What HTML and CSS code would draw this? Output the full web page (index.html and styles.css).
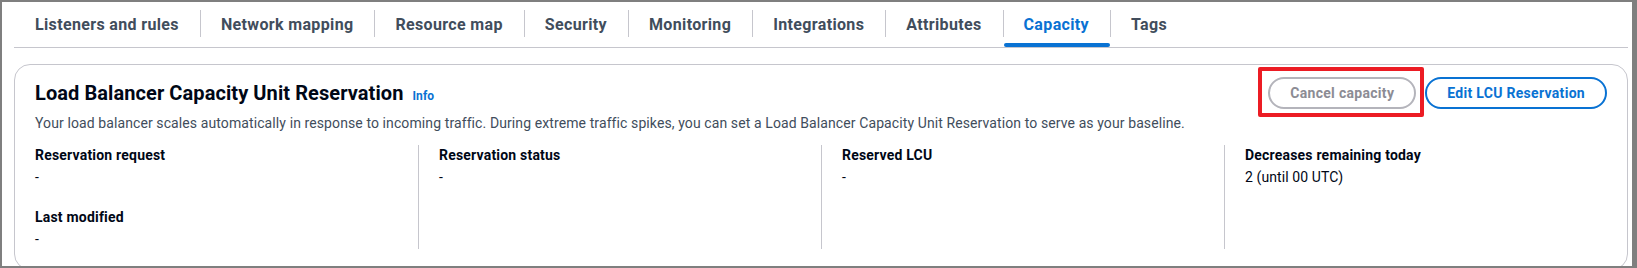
FILE: index.html
```html
<!DOCTYPE html>
<html lang="en">
<head>
    <meta charset="UTF-8">
    <meta name="viewport" content="width=device-width, initial-scale=1.0">
    <title>Load balancer - Capacity</title>
    <link rel="stylesheet" href="styles.css">
</head>
<body>
    <div class="frame">
        <div class="tabs">
            <div class="tab"><span class="tab-label">Listeners and rules</span></div>
            <div class="tab"><span class="tab-label">Network mapping</span></div>
            <div class="tab"><span class="tab-label">Resource map</span></div>
            <div class="tab"><span class="tab-label">Security</span></div>
            <div class="tab"><span class="tab-label">Monitoring</span></div>
            <div class="tab"><span class="tab-label">Integrations</span></div>
            <div class="tab"><span class="tab-label">Attributes</span></div>
            <div class="tab active"><span class="tab-label">Capacity</span></div>
            <div class="tab"><span class="tab-label">Tags</span></div>
        </div>

        <div class="card">
            <div class="card-header">
                <div class="heading">
                    <h2>Load Balancer Capacity Unit Reservation</h2>
                    <a class="info-link" href="#">Info</a>
                </div>
                <div class="actions">
                    <div class="highlight">
                        <button class="btn" disabled>Cancel capacity</button>
                    </div>
                    <button class="btn">Edit LCU Reservation</button>
                </div>
            </div>
            <p class="description">Your load balancer scales automatically in response to incoming traffic. During extreme traffic spikes, you can set a Load Balancer Capacity Unit Reservation to serve as your baseline.</p>

            <div class="columns">
                <div class="column">
                    <div class="pair">
                        <div class="label">Reservation request</div>
                        <div class="value">-</div>
                    </div>
                    <div class="pair">
                        <div class="label">Last modified</div>
                        <div class="value">-</div>
                    </div>
                </div>
                <div class="column">
                    <div class="pair">
                        <div class="label">Reservation status</div>
                        <div class="value">-</div>
                    </div>
                </div>
                <div class="column">
                    <div class="pair">
                        <div class="label">Reserved LCU</div>
                        <div class="value">-</div>
                    </div>
                </div>
                <div class="column">
                    <div class="pair">
                        <div class="label">Decreases remaining today</div>
                        <div class="value">2 (until 00 UTC)</div>
                    </div>
                </div>
            </div>
        </div>
    </div>
</body>
</html>
```

FILE: styles.css
```css
body {
    margin: 0;
    font-family: Roboto, "Liberation Sans", Arial, sans-serif;
    font-size: 14px;
    line-height: 20px;
    color: #000716;
    background-color: #fff;
    letter-spacing: 0.1px;
}
.frame {
    height: 268px;
    box-sizing: border-box;
    border-style: solid;
    border-color: #7f7f7f;
    border-width: 2px 5px 2px 2px;
    padding: 0 4px 0 12px;
    overflow: hidden;
}

/* tabs */
.tabs {
    display: flex;
    height: 46px;
    box-sizing: border-box;
    border-bottom: 1px solid #c6c6cd;
}
.tab {
    position: relative;
    height: 45px;
    box-sizing: border-box;
    padding-top: 8px;
}
.tab-label {
    display: block;
    padding: 5px 21px 2px 20px;
    line-height: 20px;
    font-size: 16px;
    font-weight: 700;
    letter-spacing: 0.35px;
    color: #414d5c;
    border-left: 1px solid #c6c6cd;
}
.tab:first-child .tab-label {
    border-left: none;
    padding-left: 21px;
}
.tab.active .tab-label {
    color: #0972d3;
}
.tab.active::after {
    content: "";
    position: absolute;
    left: 1px;
    right: 0;
    bottom: 0;
    height: 4px;
    border-radius: 2px;
    background-color: #0972d3;
}

/* container */
.card {
    margin-top: 16px;
    border: 1px solid #c6c6cd;
    border-radius: 16px;
    padding: 12px 20px 20px;
}
.card-header {
    display: flex;
    justify-content: space-between;
    align-items: center;
}
.heading {
    display: flex;
    align-items: baseline;
}
h2 {
    margin: 0;
    font-size: 20px;
    line-height: 24px;
    font-weight: 700;
    letter-spacing: 0.08px;
    color: #000716;
}
.info-link {
    margin-left: 9px;
    font-size: 12px;
    font-weight: 700;
    color: #0972d3;
    text-decoration: none;
}
.actions {
    display: flex;
    gap: 9px;
}
/* red annotation box round the cancel button */
.highlight {
    position: relative;
}
.highlight::after {
    content: "";
    position: absolute;
    top: -10px;
    left: -10px;
    right: -8px;
    bottom: -8px;
    border: 4px solid #ec1c24;
    border-radius: 2px;
    pointer-events: none;
}
.btn {
    display: block;
    height: 32px;
    box-sizing: border-box;
    padding: 0 20px;
    border: 2px solid #0972d3;
    border-radius: 20px;
    background-color: #fff;
    color: #0972d3;
    font-family: inherit;
    font-size: 14px;
    font-weight: 700;
    letter-spacing: 0.3px;
    cursor: pointer;
}
.btn:disabled {
    border-color: #b4b4bb;
    color: #8c8c94;
    cursor: default;
}
.description {
    margin: 4px 0 0;
    color: #414d5c;
}

/* key-value columns */
.columns {
    display: grid;
    grid-template-columns: repeat(4, 1fr);
    margin: 12px -20px 0;
}
.column {
    padding: 0 20px;
    border-left: 1px solid #c6c6cd;
}
.column:first-child {
    border-left: none;
}
.pair + .pair {
    margin-top: 20px;
}
.label {
    font-weight: 700;
    letter-spacing: 0.2px;
    padding-bottom: 2px;
}
```
